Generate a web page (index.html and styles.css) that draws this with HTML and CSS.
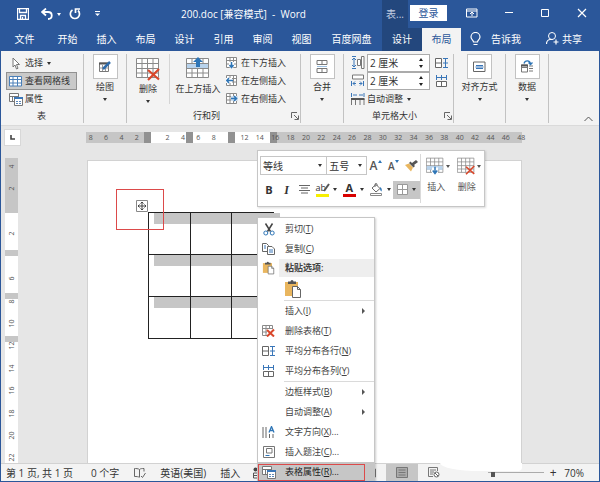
FILE: index.html
```html
<!DOCTYPE html>
<html lang="zh-CN">
<head>
    <meta charset="UTF-8">
    <meta name="viewport" content="width=device-width, initial-scale=1.0">
    <title>200.doc [兼容模式] - Word</title>
    <link rel="stylesheet" href="styles.css">
</head>
<body>
    <!-- Shared icons -->
    <svg class="sprite" aria-hidden="true">
        <symbol id="i-grid" viewBox="0 0 24 24">
            <path d="M1 1.5h21v19H1z" fill="#fff"/>
            <path d="M.5 1.5h22v19H.5zM.5 6.5h22M.5 11.5h22M.5 16h22M6 1.5v19M11.5 1.5v19M17 1.5v19" fill="none" stroke="#8a8a8a"/>
        </symbol>
        <symbol id="i-griddel" viewBox="0 0 24 24">
            <use href="#i-grid"/>
            <path d="M12 13l11 9.500M23 12L12 23" stroke="#d9472b" stroke-width="2.200"/>
        </symbol>
        <symbol id="i-props" viewBox="0 0 14 13">
            <path d="M.5.500h9v8h-9zM.5 3.500h9M3.500 3.500v5" fill="#fff" stroke="#777"/>
            <path d="M5.500 4.500h8v8h-8z" fill="#fff" stroke="#777"/>
            <path d="M5 5h9" stroke="#3a76b8" stroke-width="2"/>
            <path d="M7 8.500h2M10 8.500h2M7 10.500h2M10 10.500h2" stroke="#5b87b8"/>
        </symbol>
        <symbol id="i-rows" viewBox="0 0 13 12">
            <path d="M.5 1.500h6v9h-6zM.5 6h6" fill="#fff" stroke="#666"/>
            <path d="M8 1.500h5M8 6h5M8 10.500h5M10.500 2v8" stroke="#3a76b8" fill="none"/>
        </symbol>
        <symbol id="i-cols" viewBox="0 0 13 12">
            <path d="M1.500 6.500h10v5h-10zM6.500 6.500v5" fill="#fff" stroke="#666"/>
            <path d="M1.500 0v5M6.500 0v5M11.500 0v5M2 2.500h9" stroke="#3a76b8" fill="none"/>
        </symbol>
        <symbol id="i-smallgrid" viewBox="0 0 12 12">
            <path d="M.5.500h10v10H.5zM.5 3.500h10M.5 7h10M4 .5v10M7.500.500v10" fill="#fff" stroke="#8a8a8a"/>
        </symbol>
        <symbol id="i-paste" viewBox="0 0 18 20">
            <path d="M1 3h13v14H1z" fill="#e9b65f"/>
            <path d="M4 5V2.500h2.500a1.500 1.500 0 0 1 3 0H12V5z" fill="#555"/>
            <path d="M8.500 7.500h5l3 3v8h-8z" fill="#fff" stroke="#666"/>
            <path d="M13.500 7.500v3h3" fill="none" stroke="#666"/>
        </symbol>
        <symbol id="i-launch" viewBox="0 0 8 8">
            <path d="M.5 6V.500H6M3 3l4 4M7.500 3.500v4h-4" fill="none" stroke="#666"/>
        </symbol>
    </svg>

    <div class="window">
        <header class="titlebar">
            <div class="quick-access">
                <button class="icon-btn" aria-label="保存"><svg width="12" height="12" viewBox="0 0 12 12"><path d="M.5.500h11v11H.5zM2.500.500v4h7v-4M3.500 11.500v-4h5v4M5.500 9v2" fill="none" stroke="#fff" stroke-width="1.300"/></svg></button>
                <button class="icon-btn" aria-label="撤消"><svg width="12" height="12" viewBox="0 0 12 12"><path d="M5 .5L1 4l4 3.500M1.500 4H7c5 0 5 7 0 7" fill="none" stroke="#fff" stroke-width="1.800"/></svg></button>
                <span class="caret"></span>
                <button class="icon-btn" aria-label="重复"><svg width="12" height="12" viewBox="0 0 12 12"><path d="M3.500 2A4.600 4.600 0 1 0 9 2.500M6.500 5V1h4.500" fill="none" stroke="#fff" stroke-width="1.700"/></svg></button>
                <button class="icon-btn customize" aria-label="自定义快速访问工具栏"><svg width="6" height="6" viewBox="0 0 6 6"><path d="M0 .5h5" stroke="#fff"/><path d="M0 2.500h5L2.500 5z" fill="#fff"/></svg></button>
            </div>
            <h1 class="doc-title">200.doc [兼容模式]&nbsp; -&nbsp; Word</h1>
            <div class="title-right">
                <span class="context-name">表...</span>
                <button class="login">登录</button>
                <div class="window-buttons">
                    <button class="icon-btn" aria-label="功能区显示选项"><svg width="12" height="10" viewBox="0 0 12 10"><path d="M.5 1h10.500v8H.5zM.5 3h10.500M6 8V4.500M4 6l2-2 2 2" fill="none" stroke="#fff"/></svg></button>
                    <button class="icon-btn" aria-label="最小化"><svg width="12" height="10" viewBox="0 0 12 10"><path d="M2 4.500h8" stroke="#fff"/></svg></button>
                    <button class="icon-btn" aria-label="最大化"><svg width="12" height="10" viewBox="0 0 12 10"><path d="M2.500 1.500h7v7h-7z" fill="none" stroke="#fff"/></svg></button>
                    <button class="icon-btn" aria-label="关闭"><svg width="12" height="10" viewBox="0 0 12 10"><path d="M2 1l8 8M10 1L2 9" stroke="#fff" stroke-width="1.200"/></svg></button>
                </div>
            </div>
        </header>

        <nav class="tabs">
            <button class="tab tab-file">文件</button>
            <button class="tab">开始</button>
            <button class="tab">插入</button>
            <button class="tab">布局</button>
            <button class="tab">设计</button>
            <button class="tab">引用</button>
            <button class="tab">审阅</button>
            <button class="tab">视图</button>
            <button class="tab tab-wide">百度网盘</button>
            <button class="tab tab-context">设计</button>
            <button class="tab tab-active">布局</button>
            <button class="tab tab-tell">
                <svg width="11" height="14" viewBox="0 0 11 14"><path d="M3.500 10c0-2-2.500-2.500-2.500-5a4.500 4.500 0 0 1 9 0c0 2.500-2.500 3-2.500 5zM3.500 12.500h4" fill="none" stroke="#fff" stroke-width="1.200"/></svg>
                告诉我
            </button>
            <button class="tab tab-share">
                <svg width="13" height="13" viewBox="0 0 13 13"><circle cx="6" cy="4" r="3.500" fill="none" stroke="#fff"/><path d="M.5 12c0-3 2-4.500 4-4.500h2M10 7.500v5M7.500 10h5" fill="none" stroke="#fff" stroke-width="1.200"/></svg>
                共享
            </button>
        </nav>

        <section class="ribbon">
            <div class="group group-table">
                <div class="group-body">
                    <div class="rows">
                        <button class="row-btn"><svg width="14" height="13" viewBox="0 0 14 13"><path d="M4 1v9l2-2 1.500 4 1.500-.7L7.500 7.500h3z" fill="#fff" stroke="#777"/></svg>选择<span class="caret"></span></button>
                        <button class="row-btn pressed"><svg width="14" height="11" viewBox="0 0 14 11"><path d="M.5.500h12v9.500H.5z" fill="#fff"/><path d="M.5.500h12v9.500H.5zM.5 3.500h12M.5 7h12M4 .5V10M8.500.500V10" fill="none" stroke="#4a7fb8"/></svg>查看网格线</button>
                        <button class="row-btn"><svg width="14" height="13"><use href="#i-props"/></svg>属性</button>
                    </div>
                </div>
                <div class="group-label">表</div>
            </div>

            <div class="group group-one">
                <button class="box-btn">
                    <span class="box"><svg width="14" height="14" viewBox="0 0 14 14"><path d="M1.500 3h9v8.500h-9z" fill="#fff" stroke="#777"/><path d="M1 3.500h10" stroke="#555" stroke-width="2"/><path d="M1.500 8h9M4.500 5v6M7.500 5v6" stroke="#999"/><path d="M5 9l7-7" stroke="#2f6cab" stroke-width="2.500"/></svg></span>
                    绘图<span class="caret"></span>
                </button>
            </div>

            <div class="group group-rowcol">
                <div class="group-body">
                    <button class="big-btn big-delete"><svg width="24" height="24"><use href="#i-griddel"/></svg>删除<span class="caret"></span></button>
                    <button class="big-btn big-above"><svg width="24" height="24" viewBox="0 0 24 24"><use href="#i-grid" width="24" height="24"/><path d="M1 7h21v4H1z" fill="#b9d3ec"/><path d="M12 0l5 5h-3v5h-4V5H7z" fill="#2e75b6"/></svg>在上方插入</button>
                    <div class="rows">
                        <button class="row-btn"><svg width="12" height="12" viewBox="0 0 12 12"><use href="#i-smallgrid" width="12" height="12"/><path d="M3 5h5v3h2l-4.500 4L1 8h2z" fill="#fff"/><path d="M5.500 5v5M3.500 8l2 2.500 2-2.500" fill="none" stroke="#2e75b6" stroke-width="1.500"/></svg>在下方插入</button>
                        <button class="row-btn"><svg width="12" height="12" viewBox="0 0 12 12"><use href="#i-smallgrid" width="12" height="12"/><path d="M0 3h6v5H0z" fill="#fff"/><path d="M7 5.500H1M3 3L.7 5.500 3 8" fill="none" stroke="#2e75b6" stroke-width="1.500"/></svg>在左侧插入</button>
                        <button class="row-btn"><svg width="12" height="12" viewBox="0 0 12 12"><use href="#i-smallgrid" width="12" height="12"/><path d="M5 3h7v5H5z" fill="#cfe0f1"/><path d="M5 5.500h5M8 3l2.500 2.500L8 8" fill="none" stroke="#2e75b6" stroke-width="1.500"/></svg>在右侧插入</button>
                    </div>
                </div>
                <div class="group-label">行和列<button class="launcher" aria-label="行和列设置"><svg width="8" height="8"><use href="#i-launch"/></svg></button></div>
            </div>

            <div class="group group-one">
                <button class="box-btn">
                    <span class="box"><svg width="13" height="15" viewBox="0 0 13 15"><path d="M1 1.500h10v4H1zM6 1.500v4" fill="#fff" stroke="#777"/><path d="M1 9.500h10v4H1zM6 9.500v4" fill="#fff" stroke="#777"/><path d="M1 7.500h10" stroke="#9cc0e2"/></svg></span>
                    合并<span class="caret"></span>
                </button>
            </div>

            <div class="group group-size">
                <div class="group-body">
                    <div class="rows">
                        <div class="size-row">
                            <svg width="14" height="14" viewBox="0 0 14 14"><path d="M1 .5h4M1 12.500h4M3 2v9M1 4l2-2 2 2M1 9l2 2 2-2" fill="none" stroke="#3a76b8"/><path d="M6.500 3.500h3v6h-3zM10.500.500h2.500v12h-2.500z" fill="#fff" stroke="#777"/></svg>
                            <span class="spin"><input type="text" value="2 厘米" aria-label="高度"><span class="spin-arrows"><i class="up"></i><i class="down"></i></span></span>
                            <button class="icon-btn" aria-label="分布行"><svg width="13" height="12"><use href="#i-rows"/></svg></button>
                        </div>
                        <div class="size-row">
                            <svg width="14" height="14" viewBox="0 0 14 14"><path d="M1.500 1h11v4h-11z" fill="#fff" stroke="#777"/><path d="M.5 7v5M12.500 7v5M2 9.500h3M8 9.500h3M4 7.500l-2 2 2 2M9 7.500l2 2-2 2" fill="none" stroke="#3a76b8"/></svg>
                            <span class="spin"><input type="text" value="2 厘米" aria-label="宽度"><span class="spin-arrows"><i class="up"></i><i class="down"></i></span></span>
                            <button class="icon-btn" aria-label="分布列"><svg width="13" height="12"><use href="#i-cols"/></svg></button>
                        </div>
                        <button class="row-btn"><svg width="14" height="12" viewBox="0 0 14 12"><path d="M.5 0v4M13 0v4M2 2h4M8 2h4" stroke="#3a76b8"/><path d="M.5 12V6h12.500v6M4.500 6v6M9 6v6" fill="none" stroke="#777"/><path d="M0 6h13.500" stroke="#555" stroke-width="2"/></svg>自动调整<span class="caret"></span></button>
                    </div>
                </div>
                <div class="group-label">单元格大小<button class="launcher" aria-label="单元格大小设置"><svg width="8" height="8"><use href="#i-launch"/></svg></button></div>
            </div>

            <div class="group group-align">
                <button class="box-btn">
                    <span class="box"><svg width="13" height="12" viewBox="0 0 13 12"><path d="M.5 1h11.500v9.500H.5z" fill="#fff" stroke="#666"/><path d="M3 4.500h7M2.500 6h8M3 7.500h7" stroke="#3a76b8"/></svg></span>
                    对齐方式<span class="caret"></span>
                </button>
            </div>

            <div class="group group-one">
                <button class="box-btn">
                    <span class="box"><svg width="14" height="13" viewBox="0 0 14 13"><path d="M1.500 5h6v7h-6zM1 7.500h6M9 6h4M9 8.500h4M9 11h4" fill="none" stroke="#777"/><path d="M1 5.500h7" stroke="#555" stroke-width="2"/><path d="M4 3.500C5 0 10 0 10.500 4M8.500 2.500l2 2 2-2" fill="none" stroke="#2e75b6" stroke-width="1.300"/></svg></span>
                    数据<span class="caret"></span>
                </button>
            </div>
            <button class="collapse" aria-label="折叠功能区"><svg width="9" height="6" viewBox="0 0 9 6"><path d="M.5 5l4-4 4 4" fill="none" stroke="#555"/></svg></button>
        </section>

        <div class="ruler-bar">
            <button class="tab-stop" aria-label="制表符"><svg width="5" height="5" viewBox="0 0 5 5"><path d="M1 0v4h4" fill="none" stroke="#444" stroke-width="1.600"/></svg></button>
            <div class="ruler-h">
                <div class="track">
                    <i class="margin-left"></i><i class="stop"></i><i class="col"></i><i class="stop"></i><i class="col"></i><i class="stop"></i><i class="col"></i><i class="stop"></i><i class="margin-right"></i>
                </div>
                <div class="numbers">
                    <span>8</span><span>6</span><span>4</span><span>2</span><span></span><span>2</span><span>4</span><span>6</span><span>8</span><span></span><span>12</span><span>14</span><span>16</span><span>18</span><span>20</span><span>22</span><span>24</span><span>26</span><span>28</span><span>30</span><span>32</span><span>34</span><span>36</span><span>38</span><span>40</span><span>42</span><span>44</span><span>46</span><span>48</span>
                </div>
            </div>
        </div>

        <main class="workspace">
            <div class="ruler-v">
                <div class="track">
                    <i class="margin-top"></i><i class="row"></i><i class="stop"></i><i class="row"></i><i class="stop"></i><i class="row"></i><i class="stop"></i><i class="rest"></i>
                </div>
                <div class="numbers">
                    <span>4</span><span>2</span><span></span><span>2</span><span></span><span>6</span><span>8</span><span>10</span><span>12</span><span>14</span><span>16</span><span>18</span><span>20</span><span>22</span>
                </div>
            </div>
            <div class="page">
                <div class="table-area">
                    <table class="doc-table">
                        <tr><td></td><td></td><td></td></tr>
                        <tr><td></td><td></td><td></td></tr>
                        <tr><td></td><td></td><td></td></tr>
                    </table>
                    <div class="handle"><svg width="12" height="12" viewBox="0 0 12 12"><path d="M.5.500h11v11H.5z" fill="#fff" stroke="#888"/><path d="M2 6h8M6 2v8M4.500 3.500L6 2l1.500 1.500M4.500 8.500L6 10l1.500-1.500M3.500 4.500L2 6l1.500 1.500M8.500 4.500L10 6 8.500 7.500" fill="none" stroke="#444"/></svg></div>
                    <div class="mark mark-handle"></div>
                </div>
            </div>
        </main>

        <footer class="statusbar">
            <span class="st-page">第 1 页, 共 1 页</span>
            <span class="st-words">0 个字</span>
            <svg class="st-proof" width="12" height="10" viewBox="0 0 12 10"><path d="M5.500 1.500v7.500M5.500 1.500c-1-1-4-1-5-1v8c2 0 4 0 5 1M5.500 1.500c1-1 2.500-1 4.500-1v3M7 8l1.500 1.500L11.500 5" fill="none" stroke="#666"/></svg>
            <span class="st-lang">英语(美国)</span>
            <span class="st-mode">插入</span>
            <svg class="st-macro" width="12" height="12" viewBox="0 0 12 12"><circle cx="2.500" cy="2.500" r="2" fill="#444"/><path d="M.5 6h10v5H.5zM.5 8.500h10" fill="none" stroke="#555"/></svg>
            <div class="views">
                <button class="view" aria-label="阅读视图"><svg width="12" height="10" viewBox="0 0 12 10"><path d="M.5 1h11v8H.5zM6 1v8" fill="none" stroke="#777"/></svg></button>
                <button class="view selected" aria-label="页面视图"><svg width="12" height="11" viewBox="0 0 12 11"><path d="M.5.500h11v10H.5z" fill="#ababab" stroke="#777"/><path d="M2.500 3h7M2.500 5.500h7M2.500 8h7" stroke="#777"/></svg></button>
                <button class="view" aria-label="Web 版式视图"><svg width="12" height="11" viewBox="0 0 12 11"><path d="M9.500 4V.500H.5v9H5M2 3h6M2 5h4M2 7h3" fill="none" stroke="#777"/><circle cx="8.500" cy="7.500" r="2.500" fill="#fff" stroke="#666"/><path d="M7 6l3 3" stroke="#666"/></svg></button>
            </div>
            <input class="zoom-slider" type="range" min="10" max="190" value="18" aria-label="缩放">
            <button class="zoom-in" aria-label="放大">+</button>
            <span class="st-zoom">70%</span>
            <div class="blank-patch"></div>
        </footer>

        <!-- Floating mini toolbar -->
        <div class="mini-toolbar">
            <div class="mini-left">
                <div class="mini-row">
                    <span class="combo combo-font"><select aria-label="字体"><option>等线</option></select><i class="caret"></i></span>
                    <span class="combo combo-size"><select aria-label="字号"><option>五号</option></select><i class="caret"></i></span>
                    <button class="mini-btn grow" aria-label="增大字号">A<svg width="4" height="3" viewBox="0 0 4 3"><path d="M0 3l2-3 2 3z" fill="#2e75b6"/></svg></button>
                    <button class="mini-btn shrink" aria-label="减小字号">A<svg width="4" height="3" viewBox="0 0 4 3"><path d="M0 0l2 3 2-3z" fill="#2e75b6"/></svg></button>
                    <button class="mini-btn" aria-label="格式刷"><svg width="13" height="12" viewBox="0 0 13 12"><path d="M0 5l4-1.500 4 4L6 11.500z" fill="#e9b65f"/><path d="M4 3l4.500 4.500 1.500-1.500-1-1L13 2l-2-2-4 3-1.500-1.500z" fill="#555"/></svg></button>
                </div>
                <div class="mini-row">
                    <button class="mini-btn bold">B</button>
                    <button class="mini-btn italic">I</button>
                    <button class="mini-btn" aria-label="居中"><svg width="11" height="9" viewBox="0 0 11 9"><path d="M0 .5h11M2 3h7M0 5.500h11M2 8h7" stroke="#666"/></svg></button>
                    <button class="mini-btn with-caret highlight"><span>ab<svg class="pen" width="7" height="9" viewBox="0 0 7 9"><path d="M1 8l5-7" stroke="#555" stroke-width="2"/></svg></span><i class="caret"></i></button>
                    <button class="mini-btn with-caret fontcolor"><span>A</span><i class="caret"></i></button>
                    <button class="mini-btn with-caret" aria-label="底纹"><svg width="13" height="13" viewBox="0 0 13 13"><path d="M2 5l4-3.500 4 4L6 9z" fill="#fff" stroke="#666"/><path d="M5 4V1.500a1 1 0 0 1 2 0V3" fill="none" stroke="#666"/><path d="M10 4c2 1 2 3 1.500 4.500C10 8 10 6 10 4z" fill="#2e75b6"/><path d="M.5 10.500h11v2H.5z" fill="#fff" stroke="#888"/></svg><i class="caret"></i></button>
                    <button class="mini-btn with-caret borders" aria-label="边框"><svg width="11" height="11" viewBox="0 0 11 11"><path d="M.5.500h10v10H.5zM5.500.500v10M.5 5.500h10" fill="#fff" stroke="#999"/></svg><i class="caret"></i></button>
                </div>
            </div>
            <button class="mini-big"><span><svg width="18" height="18" viewBox="0 0 24 24"><use href="#i-grid" width="24" height="24"/><path d="M1 12h21v5H1z" fill="#b9d3ec"/><path d="M8 14h8v8H8z" fill="#fff"/><path d="M12 13v8M9 18l3 4 3-4" fill="none" stroke="#2e75b6" stroke-width="2"/></svg><i class="caret"></i></span>插入</button>
            <button class="mini-big"><span><svg width="18" height="18"><use href="#i-griddel"/></svg><i class="caret"></i></span>删除</button>
        </div>

        <!-- Context menu -->
        <div class="context-menu">
            <button class="item"><svg width="12" height="13" viewBox="0 0 12 13"><path d="M2.500.500l5 8M9.500.500l-5 8" stroke="#444" stroke-width="1.500"/><circle cx="2.800" cy="10" r="2" fill="none" stroke="#2e75b6"/><circle cx="9.200" cy="10" r="2" fill="none" stroke="#2e75b6"/></svg><span>剪切(<u>T</u>)</span></button>
            <button class="item"><svg width="13" height="12" viewBox="0 0 13 12"><path d="M.5.500h4l2 2v6h-6z" fill="#fff" stroke="#666"/><path d="M5.500 3.500h4.500l2.500 2.500v5.500h-7z" fill="#fff" stroke="#666"/><path d="M2 3h2M2 5h2M7 7h4M7 9h4" stroke="#3a76b8"/></svg><span>复制(<u>C</u>)</span></button>
            <div class="item header"><svg width="13" height="14"><use href="#i-paste"/></svg><span>粘贴选项:</span></div>
            <div class="paste-row"><button class="icon-btn" aria-label="保留源格式"><svg width="18" height="20"><use href="#i-paste"/></svg></button></div>
            <button class="item"><i></i><span>插入(<u>I</u>)</span><b class="arrow"></b></button>
            <button class="item"><svg width="13" height="12" viewBox="0 0 13 12"><use href="#i-smallgrid" width="12" height="12"/><path d="M5 4h8v8H5z" fill="#fff"/><path d="M5 5l7 6.500M12 4.500L5 11.500" stroke="#d9472b" stroke-width="2"/></svg><span>删除表格(<u>T</u>)</span></button>
            <button class="item"><svg width="13" height="12"><use href="#i-rows"/></svg><span>平均分布各行(<u>N</u>)</span></button>
            <button class="item"><svg width="13" height="12"><use href="#i-cols"/></svg><span>平均分布各列(<u>Y</u>)</span></button>
            <hr>
            <button class="item split"><i></i><span>边框样式(<u>B</u>)</span><b class="arrow"></b></button>
            <button class="item"><i></i><span>自动调整(<u>A</u>)</span><b class="arrow"></b></button>
            <button class="item"><svg width="13" height="12" viewBox="0 0 13 12"><path d="M1 1v11M4 1v11M7.500 8v4M11 8v4" stroke="#666"/><path d="M7 6.500l2.500-6 2.500 6M8 4.500h3" fill="none" stroke="#2e75b6" stroke-width="1.300"/></svg><span>文字方向(<u>X</u>)...</span></button>
            <button class="item"><svg width="12" height="12" viewBox="0 0 12 12"><path d="M.5.500h11v11H.5zM3.500 2.500h5.500v4.500H3.500z" fill="#fff" stroke="#777"/><path d="M2.500 9.500h4" stroke="#2e75b6"/></svg><span>插入题注(<u>C</u>)...</span></button>
            <button class="item current"><svg width="14" height="13"><use href="#i-props"/></svg><span>表格属性(<u>R</u>)...</span></button>
            <div class="mark mark-item"></div>
        </div>
    </div>
</body>
</html>
```
FILE: styles.css
```css
* {
    box-sizing: border-box;
}
body {
    margin: 0;
    font-family: "Open Sans", "Noto Sans CJK SC", sans-serif;
    font-size: 9px;
    line-height: 14px;
    color: #333;
    background: #e6e6e6;
}
button, input, select {
    margin: 0;
    padding: 0;
    border: 0;
    background: none;
    font: inherit;
    color: inherit;
}
svg {
    display: block;
    flex: none;
}
.sprite {
    position: absolute;
    width: 0;
    height: 0;
}
.window {
    position: relative;
    display: flex;
    flex-direction: column;
    height: 100vh;
    overflow: hidden;
    border: 1px solid #2b579a;
    border-top: 0;
}
.icon-btn {
    display: flex;
    align-items: center;
    justify-content: center;
}
.caret {
    flex: none;
    width: 0;
    height: 0;
    border: 2px solid transparent;
    border-top: 3px solid currentColor;
    border-bottom: 0;
}
.mark {
    position: absolute;
    border: 1px solid #dc4a4a;
    pointer-events: none;
}

/* Title bar */
.titlebar {
    display: flex;
    flex: none;
    height: 28px;
    background: #2b579a;
    color: #fff;
    font-size: 10px;
}
.quick-access {
    display: flex;
    align-items: center;
    gap: 4px;
    width: 104px;
    padding-left: 16px;
}
.quick-access .icon-btn:nth-child(2) {
    margin-left: 8px;
}
.quick-access .icon-btn:nth-child(4) {
    margin-left: 4px;
}
.quick-access .customize {
    margin-left: 10px;
}
.doc-title {
    flex: 1;
    margin: 0;
    font-size: 10px;
    font-weight: 400;
    line-height: 28px;
    text-align: center;
    white-space: nowrap;
}
.title-right {
    display: flex;
    align-items: center;
    width: 217px;
}
.context-name {
    width: 26px;
    line-height: 28px;
    padding-left: 4px;
    background: #23477d;
    color: #c3d0e4;
}
.login {
    width: 37px;
    height: 16px;
    margin: 0 0 2px 2px;
    background: #fff;
    color: #2b579a;
}
.window-buttons {
    display: flex;
    flex: 1;
    justify-content: space-between;
    padding: 0 11px 2px 19px;
}

/* Ribbon tabs */
.tabs {
    display: flex;
    flex: none;
    height: 23px;
    background: #2b579a;
    color: #fff;
    font-size: 10px;
}
.tab {
    flex: none;
    width: 39px;
    padding-bottom: 2px;
    color: #fff;
    white-space: nowrap;
}
.tab-file {
    width: 47px;
}
.tab-wide {
    flex: 1;
}
.tab-context {
    width: 40px;
    background: #23477d;
}
.tab-active {
    background: #f3f3f3;
    color: #2b579a;
}
.tab-tell, .tab-share {
    display: flex;
    align-items: center;
    gap: 10px;
    width: 76px;
    padding-left: 9px;
}
.tab-share {
    gap: 3px;
    width: 62px;
}

/* Ribbon */
.ribbon {
    display: flex;
    flex: none;
    height: 75px;
    padding: 3px 0;
    background: #f3f3f3;
    border-bottom: 1px solid #dadada;
}
.group {
    display: flex;
    flex: none;
    flex-direction: column;
    height: 69px;
    border-right: 1px solid #c2c2c2;
}
.group-body {
    display: flex;
    height: 54px;
}
.group-label {
    display: flex;
    justify-content: center;
    align-items: center;
    height: 18px;
    white-space: nowrap;
}
.group-table {
    width: 83px;
    padding: 0 6px 0 5px;
}
.group-one {
    width: 43px;
}
.group-rowcol {
    width: 174px;
}
.group-size {
    width: 110px;
    padding-left: 7px;
}
.group-align {
    width: 52px;
}
.group-rowcol .group-label,
.group-size .group-label {
    justify-content: flex-end;
    padding-right: 1px;
}
.launcher {
    margin-left: 71px;
}
.group-size .launcher {
    margin-left: 27px;
}
.rows {
    display: flex;
    flex-direction: column;
}
.row-btn {
    display: flex;
    align-items: center;
    gap: 2px;
    height: 18px;
    padding-left: 2px;
    white-space: nowrap;
    line-height: 16px;
}
.row-btn .caret {
    margin-left: 2px;
}
.group-table .row-btn {
    width: 71px;
    padding-left: 3px;
}
.group-table .pressed {
    padding-left: 2px;
    border: 1px solid #919191;
    background: #c9c9c9;
}
.group-size .row-btn {
    padding-left: 0;
}
.box-btn, .big-btn {
    display: flex;
    flex-direction: column;
    align-items: center;
    white-space: nowrap;
    line-height: 16px;
}
.box-btn .caret, .big-btn .caret {
    margin-top: 3px;
}
.box {
    display: flex;
    align-items: center;
    justify-content: center;
    width: 25px;
    height: 25px;
    border: 1px solid #c2c2c2;
    background: #fff;
}
.big-btn {
    padding-top: 3px;
}
.big-delete {
    width: 43px;
    height: 50px;
    border-right: 1px solid #d5d5d5;
}
.big-above {
    width: 56px;
    height: 50px;
}
.group-rowcol .row-btn {
    gap: 3px;
    padding-left: 0;
}
.size-row {
    display: flex;
    align-items: center;
    gap: 2px;
    height: 18px;
}
.size-row .icon-btn {
    margin-left: 3px;
}
.spin {
    display: flex;
    width: 63px;
    height: 18px;
    border: 1px solid #ababab;
    background: #fff;
}
.spin input {
    flex: 1;
    width: 40px;
    padding-left: 2px;
    font-size: 10px;
}
.spin-arrows {
    display: flex;
    flex-direction: column;
    justify-content: center;
    gap: 4px;
    width: 10px;
}
.up, .down {
    width: 0;
    height: 0;
    border: 2px solid transparent;
}
.up {
    border-top: 0;
    border-bottom: 3px solid #222;
}
.down {
    border-bottom: 0;
    border-top: 3px solid #222;
}
.collapse {
    align-self: flex-end;
    margin: 0 6px 0 auto;
}

/* Rulers */
.ruler-bar {
    display: flex;
    flex: none;
    align-items: center;
    height: 22px;
}
.tab-stop {
    display: flex;
    align-items: center;
    justify-content: center;
    width: 17px;
    height: 17px;
    margin-left: 3px;
    border: 1px solid #d8d8d8;
    background: #fff;
}
.ruler-h {
    display: grid;
    flex: 1;
    margin: 0 70px 0 62px;
    font-size: 7px;
    line-height: 11px;
    color: #555;
}
.ruler-h .track, .ruler-h .numbers {
    display: flex;
    grid-area: 1 / 1;
    height: 11px;
}
.ruler-h .track {
    margin: 0 7px 0 3px;
}
.numbers span {
    flex: 1 1 0;
    min-width: 0;
    text-align: center;
}
.track i {
    background: #fff;
}
.ruler-h .col {
    width: 35px;
}
.track .stop {
    width: 7px;
    background: #919191;
}
.track .margin-left {
    width: 58px;
    background: #c6c6c6;
}
.track .margin-right {
    flex: 1;
    background: #c6c6c6;
}
.ruler-v {
    display: grid;
    flex: none;
    width: 13px;
    margin: 10px 0 0 4px;
    overflow: hidden;
    font-size: 7px;
    line-height: 13px;
    color: #555;
}
.ruler-v .track, .ruler-v .numbers {
    display: flex;
    flex-direction: column;
    grid-area: 1 / 1;
    min-height: 0;
}
.ruler-v .numbers {
    margin: -3px 0 -6px;
}
.ruler-v .numbers span {
    min-height: 0;
    writing-mode: vertical-rl;
    transform: rotate(180deg);
}
.ruler-v .row {
    height: 37px;
}
.ruler-v .stop {
    width: auto;
    height: 6px;
    background: #c6c6c6;
}
.track .margin-top {
    height: 55px;
    background: #c6c6c6;
}
.ruler-v .rest {
    flex: 1;
}

/* Document */
.workspace {
    display: flex;
    flex: 1;
    min-height: 0;
    overflow: hidden;
}
.page {
    flex: 1;
    margin: 12px 77px 0 69px;
    padding: 51px 0 0 60px;
    border: 1px solid #d2d2d2;
    border-bottom: 0;
    background: #fff;
}
.table-area {
    position: relative;
    width: 126px;
}
.doc-table {
    width: 126px;
    border-collapse: collapse;
}
.doc-table td {
    position: relative;
    width: 42px;
    height: 42px;
    padding: 0;
    border: 1px solid #222;
    background: linear-gradient(#c6c6c6, #c6c6c6) 0 0 / 100% 11px no-repeat;
}
.doc-table td:first-child {
    background-position: 5px 0;
}
.doc-table td:last-child::after {
    content: "";
    position: absolute;
    left: 100%;
    top: 0;
    width: 7px;
    height: 11px;
    background: #c6c6c6;
}
.handle {
    position: absolute;
    left: -12px;
    top: -12px;
}
.mark-handle {
    left: -32px;
    top: -23px;
    width: 48px;
    height: 41px;
}

/* Status bar */
.statusbar {
    position: relative;
    display: flex;
    flex: none;
    align-items: center;
    height: 18px;
    padding: 0 15px 0 5px;
    border-top: 1px solid #d2d2d2;
    background: #f3f3f3;
    font-size: 10px;
    white-space: nowrap;
}
.st-words {
    margin-left: 18px;
}
.st-proof {
    margin-left: 15px;
}
.st-lang {
    margin-left: 14px;
}
.st-mode {
    margin-left: 14px;
}
.st-macro {
    margin-left: 13px;
}
.views {
    display: flex;
    align-self: stretch;
    margin-left: auto;
}
.view {
    display: flex;
    align-items: center;
    justify-content: center;
    width: 32px;
}
.view.selected {
    background: #c6c6c6;
}
.zoom-slider {
    appearance: none;
    width: 56px;
    height: 12px;
    margin: 0 3px 0 38px;
    background: none;
}
.zoom-slider::-webkit-slider-runnable-track {
    height: 1px;
    background: #ababab;
}
.zoom-slider::-webkit-slider-thumb {
    appearance: none;
    width: 4px;
    height: 5px;
    background: #555;
}
.zoom-in {
    width: 12px;
    font-size: 12px;
}
.st-zoom {
    margin-left: 5px;
}
.blank-patch {
    position: absolute;
    right: 77px;
    top: -1px;
    width: 82px;
    height: 8px;
    border-radius: 0 0 4px 40px / 0 0 4px 8px;
    background: #fff;
}

/* Mini toolbar */
.mini-toolbar {
    position: absolute;
    left: 256px;
    top: 150px;
    display: flex;
    width: 228px;
    height: 57px;
    padding: 3px 2px;
    border: 1px solid #c6c6c6;
    background: #fff;
    box-shadow: 1px 1px 2px rgba(0, 0, 0, .15);
}
.mini-left {
    display: flex;
    flex-direction: column;
    gap: 5px;
    width: 161px;
    padding-top: 2px;
    border-right: 1px solid #dadada;
}
.mini-row {
    display: flex;
    align-items: center;
    height: 19px;
}
.combo {
    display: flex;
    align-items: center;
    height: 19px;
    padding-right: 4px;
    border: 1px solid #c6c6c6;
}
.combo select {
    flex: 1;
    min-width: 0;
    appearance: none;
    padding-left: 2px;
    font-size: 10px;
}
.combo-font {
    width: 68px;
}
.combo-size {
    width: 40px;
    border-left: 0;
}
.mini-btn {
    display: flex;
    align-items: center;
    justify-content: center;
    width: 18px;
    height: 18px;
    line-height: 18px;
}
.grow, .shrink {
    font-size: 12px;
    font-weight: 600;
    color: #555;
}
.shrink {
    font-size: 10px;
}
.grow svg, .shrink svg {
    align-self: flex-start;
    margin-top: 3px;
}
.bold {
    font-size: 11px;
    font-weight: 700;
}
.italic {
    font-family: "Liberation Serif", serif;
    font-size: 12px;
    font-weight: 700;
    font-style: italic;
}
.with-caret {
    gap: 4px;
    width: 27px;
}
.highlight span, .fontcolor span {
    display: flex;
    justify-content: center;
    width: 13px;
    height: 14px;
    border-bottom: 3px solid #f7ef00;
    line-height: 10px;
}
.fontcolor span {
    border-bottom-color: #d80000;
    font-size: 11px;
    font-weight: 700;
}
.highlight .pen {
    margin-left: -3px;
}
.borders {
    background: #c6c6c6;
}
.mini-big {
    display: flex;
    flex: 1;
    flex-direction: column;
    align-items: center;
    gap: 5px;
    padding-top: 3px;
    color: #555;
}
.mini-big span {
    display: flex;
    align-items: center;
    gap: 2px;
    margin-left: 4px;
}

/* Context menu */
.context-menu {
    position: absolute;
    left: 256px;
    top: 217px;
    width: 118px;
    padding-top: 1px;
    border: 1px solid #c6c6c6;
    background: #fff;
    box-shadow: 1px 1px 2px rgba(0, 0, 0, .2);
}
.item {
    display: grid;
    grid-template-columns: 21px 1fr 12px;
    align-items: center;
    width: 100%;
    height: 20px;
    text-align: left;
    white-space: nowrap;
    color: #444;
}
.item svg {
    justify-self: center;
}
.item > span {
    padding-left: 6px;
}
.header {
    height: 18px;
    font-weight: 600;
}
.header span {
    grid-column: 2 / 4;
    line-height: 18px;
    background: #eee;
}
.paste-row {
    display: flex;
    height: 24px;
    margin-left: 26px;
    border-bottom: 1px solid #dadada;
}
.arrow {
    width: 0;
    height: 0;
    border: 3px solid transparent;
    border-left: 3px solid #555;
    border-right: 0;
}
.context-menu hr {
    height: 1px;
    margin: 0 0 0 26px;
    border: 0;
    background: #dadada;
}
.current {
    background: #c6c6c6;
    color: #222;
}
.mark-item {
    left: 0;
    right: 9px;
    bottom: 1px;
    height: 17px;
}
```
